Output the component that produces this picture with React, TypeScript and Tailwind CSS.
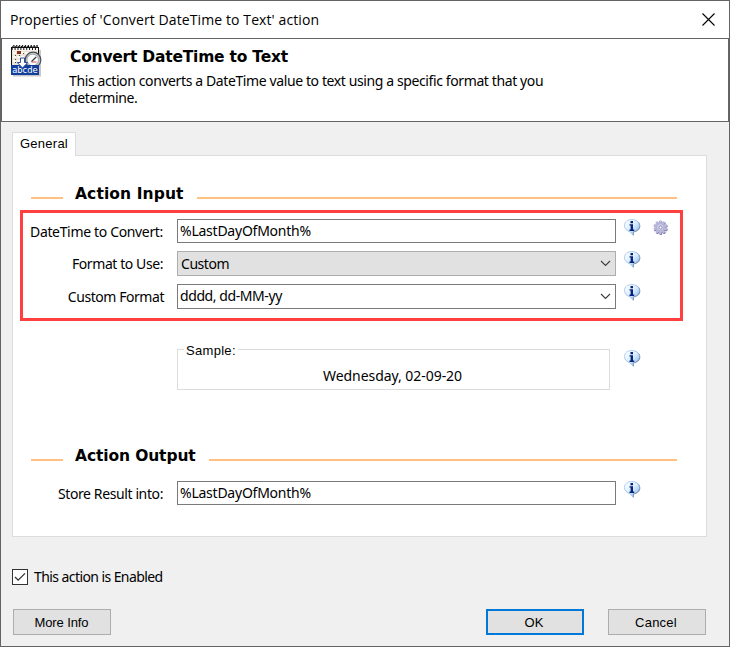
import type { ReactNode } from "react";

function CalendarIcon() {
  return (
    <svg className="block" width="34" height="34" viewBox="0 0 34 34">
      <rect x="3" y="6" width="28" height="26.500" fill="#9a9a9a" opacity=".55" />
      <rect x="1.500" y="3.500" width="27" height="27" fill="#ece4d6" stroke="#111" />
      <rect x="2" y="4" width="26" height="2.500" fill="#fff" />
      {[0, 1, 2, 3, 4, 5, 6, 7, 8].map((i) => (
        <path key={i} d={`M${2.200 + i * 2.900} 6V3.200L${4 + i * 2.900} 1.200V3.600`} fill="none" stroke="#111" strokeWidth="1" />
      ))}
      <g fill="#fdfbf6">
        {[3, 7, 11, 15, 19, 23].map((x) => (
          <g key={x}>
            <rect x={x} y="8" width="3" height="2" />
            <rect x={x} y="12" width="3" height="2" />
            <rect x={x} y="16" width="3" height="2" />
          </g>
        ))}
      </g>
      <g fill="#4a4640">
        <rect x="5" y="11" width="1" height="1" />
        <rect x="9" y="11" width="1" height="1" />
        <rect x="5" y="15" width="1" height="1" />
        <rect x="5" y="18" width="1" height="1" />
        <rect x="13" y="9" width="1" height="1" />
      </g>
      <rect x="7" y="7" width="4" height="3" fill="#87301c" />
      <circle cx="23" cy="16" r="7.800" fill="#c6cbd0" stroke="#4b5057" strokeWidth="1.200" />
      <circle cx="22.700" cy="16" r="5.800" fill="#fafbfc" stroke="#8e959d" strokeWidth=".8" />
      <path d="M21.500 17.500l4.700-4.500" stroke="#333" strokeWidth="1.100" />
      <path d="M21.500 18h5" stroke="#d0402e" strokeWidth=".9" />
      <rect x="1" y="21" width="28" height="10" fill="#123f9c" />
      <path d="M10.500 14h4v4.500h3.200l-5.200 5.500-5.200-5.500h3.200z" fill="#fff" stroke="#123f9c" strokeWidth=".9" />
      <text x="2.200" y="29" fill="#fff" fontFamily="DejaVu Sans, sans-serif" fontSize="9" textLength="25.500" lengthAdjust="spacingAndGlyphs">abcde</text>
    </svg>
  );
}

function InfoIcon() {
  return (
    <svg className="block" width="17" height="17" viewBox="0 0 17 17">
      <defs>
        <linearGradient id="bubble" x1="0" y1="0" x2="1" y2="1">
          <stop offset="0" stopColor="#ffffff" />
          <stop offset=".5" stopColor="#dceeff" />
          <stop offset="1" stopColor="#79aee8" />
        </linearGradient>
      </defs>
      <path d="M8.300 1C4 1 1 3.500 1 7c0 3 2.300 5 5.500 5.900l3.500 3.900V13.200c3.500-.6 6.300-2.900 6.300-6.200 0-3.500-3-6-8-6z" fill="#4d5f7c" opacity=".8" />
      <path d="M7.800.5C3.500.5.4 3 .4 6.500c0 3 2.200 5.200 5.400 6.100l3.300 3.600V12.600c3.600-.5 6.300-2.800 6.300-6.100C15.400 3 12.100.5 7.800.5z" fill="url(#bubble)" stroke="#94bce6" strokeWidth=".7" />
      <path d="M6.500 2H9v2.200H6.500zM5.500 5.200H9v5.300h1.200v1.400H5.500v-1.400h1.100V6.500H5.500z" fill="#04247c" />
    </svg>
  );
}

function GearIcon() {
  return (
    <svg className="block" width="15" height="15" viewBox="0 0 15 15">
      <g fill="#6f6d98">
        {[0, 36, 72, 108, 144, 180, 216, 252, 288, 324].map((a) => (
          <rect key={a} x="6.400" y=".9" width="2.800" height="3" rx=".8" transform={`rotate(${a} 7.800 7.900)`} />
        ))}
        <circle cx="7.800" cy="7.900" r="5.300" />
      </g>
      <g fill="#b9b8dc">
        {[0, 36, 72, 108, 144, 180, 216, 252, 288, 324].map((a) => (
          <rect key={a} x="6" y=".4" width="2.600" height="3" rx=".8" transform={`rotate(${a} 7.300 7.300)`} />
        ))}
        <circle cx="7.300" cy="7.300" r="5.200" />
      </g>
      <circle cx="7.300" cy="7.300" r="3.600" fill="#d2d1eb" stroke="#aaa9d0" strokeWidth=".8" />
      <circle cx="7.500" cy="7.500" r="1.500" fill="#fff" stroke="#77759f" strokeWidth=".8" />
    </svg>
  );
}

function Chevron() {
  return (
    <svg className="mr-[-1px] block shrink-0" width="11" height="7" viewBox="0 0 11 7">
      <path d="M1 1l4.500 4.500L10 1" fill="none" stroke="#3c3c3c" strokeWidth="1.100" />
    </svg>
  );
}

function SectionTitle({ tracking, children }: { tracking: string; children: ReactNode }) {
  return (
    <div className="ml-[18px] flex h-6 w-[646px] items-center">
      <div className="mt-[9px] h-[2px] w-8 shrink-0 bg-[#ffc080]" />
      <h2 className={`mt-[2px] mr-[13px] ml-3 w-max shrink-0 font-['DejaVu_Sans',sans-serif] text-[15.5px] leading-[22px] font-bold whitespace-nowrap ${tracking}`}>{children}</h2>
      <div className="mt-[9px] h-[2px] flex-1 bg-[#ffc080]" />
    </div>
  );
}

function Row({ label, tracking, children, gear, box }: { label: string; tracking: string; children: ReactNode; gear?: boolean; box: string }) {
  return (
    <div className="flex items-start">
      <div className={`mt-[2px] flex w-[164px] shrink-0 justify-end leading-[22px] whitespace-nowrap ${tracking}`}>{label}</div>
      <div className={`flex w-[439px] shrink-0 items-center justify-between border pr-[5px] pl-[2px] whitespace-nowrap ${box}`}>{children}</div>
      <div className="ml-2"><InfoIcon /></div>
      {gear && <div className="mt-[1px] ml-3"><GearIcon /></div>}
    </div>
  );
}

export default function App() {
  return (
    <div className="flex h-[647px] w-[730px] flex-col overflow-hidden border border-[#646464] bg-[#f0f0f0] font-['Noto_Sans',sans-serif] text-[14px] text-black">
      <header className="flex h-[37px] shrink-0 items-center justify-between bg-white pr-[14px] pl-[9px]">
        <span className="font-['Open_Sans',sans-serif] text-[14px] tracking-[0.1px]">Properties of 'Convert DateTime to Text' action</span>
        <svg width="13" height="13" viewBox="0 0 13 13"><path d="M.5.5l12 12M12.500.5l-12 12" stroke="#000" strokeWidth="1.100" /></svg>
      </header>
      <section className="flex h-[84px] shrink-0 border border-[#646464] bg-white pt-[4px]">
        <div className="mt-[1px] ml-2 w-[34px] shrink-0"><CalendarIcon /></div>
        <div className="ml-[25px]">
          <h1 className="ml-[1px] h-[26px] pt-[1px] font-['DejaVu_Sans',sans-serif] text-[15.5px] leading-[26px] font-bold tracking-[-0.22px] whitespace-nowrap">Convert DateTime to Text</h1>
          <p className="mt-[3px] leading-[17px] tracking-[-0.39px] whitespace-nowrap">
            This action converts a DateTime value to text using a specific format that you
            <br />
            determine.
          </p>
        </div>
      </section>
      <main className="mt-[10px] ml-[11px] w-[695px] shrink-0">
        <div className="relative -mb-px flex h-6 w-16 items-center justify-center border border-b-0 border-[#dcdcdc] bg-white pb-[2px] font-['Liberation_Sans',sans-serif] text-[13px] tracking-[0.25px]">General</div>
        <div className="h-[382px] border border-[#dcdcdc] bg-white pt-[25px]">
          <SectionTitle tracking="tracking-[0.1px]">Action Input</SectionTitle>
          <div className="mt-[5px] ml-[7px] h-[111px] w-[663px] border-[3px] border-[#ff4040]">
            <div className="-ml-[10px] flex flex-col pt-[6px]">
              <div className="h-8">
                <Row label="DateTime to Convert:" tracking="tracking-[-0.34px] pr-[14px]" gear box="h-6 border-[#7a7a7a] bg-white">
                  <span className="-mt-[2px] tracking-[-0.24px]">%LastDayOfMonth%</span>
                </Row>
              </div>
              <div className="h-[33px]">
                <Row label="Format to Use:" tracking="tracking-[-0.42px] pr-[14px]" box="h-[25px] border-[#adadad] bg-[#e1e1e1]">
                  <span className="ml-[1px] tracking-[-0.45px]">Custom</span><Chevron />
                </Row>
              </div>
              <Row label="Custom Format" tracking="tracking-[-0.45px] pr-[13px]" box="h-[25px] border-[#7a7a7a] bg-white">
                <span className="-mt-[2px] tracking-[-0.42px]">dddd, dd-MM-yy</span><Chevron />
              </Row>
            </div>
          </div>
          <div className="mt-[21px] ml-[164px] flex h-12">
            <fieldset className="h-12 w-[433px] border border-[#dcdcdc]">
              <legend className="ml-[6px] h-[15px] px-[2px] pt-[1px] font-['Liberation_Sans',sans-serif] text-[13px] leading-[15px] tracking-[0.3px]">Sample:</legend>
              <div className="mt-[10px] mr-[2px] text-center leading-[18px] tracking-[-0.05px]">Wednesday, 02-09-20</div>
            </fieldset>
            <div className="mt-2 ml-[14px]"><InfoIcon /></div>
          </div>
          <div className="mt-[53px]">
            <SectionTitle tracking="tracking-[-0.12px]">Action Output</SectionTitle>
          </div>
          <div className="mt-[14px]">
            <Row label="Store Result into:" tracking="tracking-[-0.39px] pr-[14px]" box="h-6 border-[#7a7a7a] bg-white">
              <span className="-mt-[2px] tracking-[-0.24px]">%LastDayOfMonth%</span>
            </Row>
          </div>
        </div>
      </main>
      <label className="mt-7 ml-[11px] flex h-6 shrink-0 items-center">
        <span className="flex size-4 items-center justify-center border border-[#333] bg-white">
          <svg width="12" height="10" viewBox="0 0 12 10"><path d="M1 5l3.200 3.200L11 1.400" fill="none" stroke="#333" strokeWidth="1.300" /></svg>
        </span>
        <span className="-mt-[2px] ml-[6px] tracking-[-0.58px]">This action is Enabled</span>
      </label>
      <footer className="mt-5 ml-3 flex shrink-0 font-['Liberation_Sans',sans-serif] text-[13px]">
        <button className="h-[26px] w-[98px] border border-[#adadad] bg-[#e1e1e1] pt-[2px] pr-[1px] tracking-[-0.1px]">More Info</button>
        <button className="ml-[375px] h-[26px] w-[98px] border-2 border-[#0078d7] bg-[#e1e1e1] pt-[2px] pr-[2px]">OK</button>
        <button className="ml-6 h-[26px] w-[98px] border border-[#adadad] bg-[#e1e1e1] pt-[2px] pr-[2px] tracking-[0.25px]">Cancel</button>
      </footer>
    </div>
  );
}
